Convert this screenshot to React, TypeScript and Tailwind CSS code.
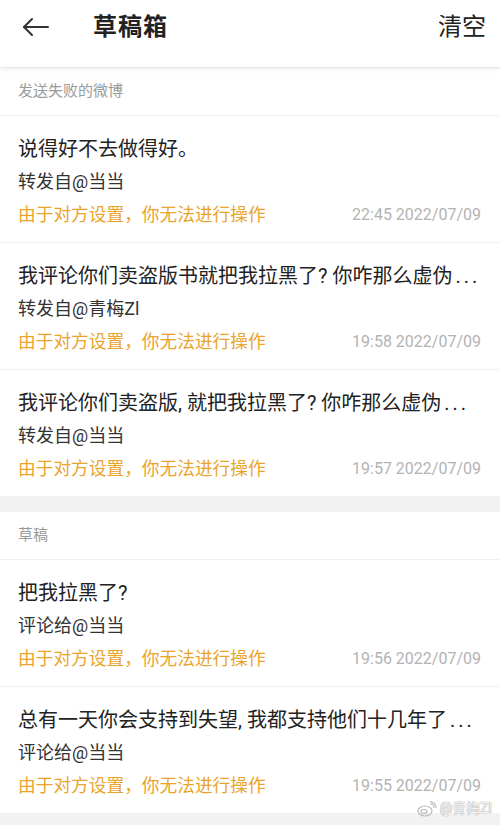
import React from 'react';

type Draft = {
  text: string;
  more?: boolean;
  meta: string;
  time: string;
};

const failed: Draft[] = [
  { text: '说得好不去做得好。', meta: '转发自@当当', time: '22:45 2022/07/09' },
  { text: '我评论你们卖盗版书就把我拉黑了? 你咋那么虚伪', more: true, meta: '转发自@青梅Zl', time: '19:58 2022/07/09' },
  { text: '我评论你们卖盗版, 就把我拉黑了? 你咋那么虚伪', more: true, meta: '转发自@当当', time: '19:57 2022/07/09' },
];

const drafts: Draft[] = [
  { text: '把我拉黑了?', meta: '评论给@当当', time: '19:56 2022/07/09' },
  { text: '总有一天你会支持到失望, 我都支持他们十几年了', more: true, meta: '评论给@当当', time: '19:55 2022/07/09' },
];

function DraftItem({ item }: { item: Draft }) {
  return (
    <div className="px-[18px] pt-[20px] pb-[15px] border-t border-[#f0f0f0]">
      <div className="text-[20px] leading-[26px] text-[#222] whitespace-nowrap">
        {item.text}
        {item.more && <span className="ml-[3px] tracking-[3px]">...</span>}
      </div>
      <div className="mt-[8px] text-[18px] leading-[24px] text-[#333]">{item.meta}</div>
      <div className="mt-[9px] flex items-center justify-between leading-[24px]">
        <span className="text-[17.7px] text-[#eaa42c]">由于对方设置，你无法进行操作</span>
        <span className="text-[16px] text-[#b3b3b3] pr-[1px]">{item.time}</span>
      </div>
    </div>
  );
}

function Section({ title, items }: { title: string; items: Draft[] }) {
  return (
    <section className="bg-white">
      <div className="h-[47px] px-[18px] flex items-center text-[15px] text-[#9a9a9a]">{title}</div>
      {items.map((item, i) => (
        <DraftItem key={i} item={item} />
      ))}
    </section>
  );
}

export default function App() {
  return (
    <div className="relative w-[500px] h-[825px] overflow-hidden bg-[#f2f2f2] font-['Roboto','Noto_Sans_CJK_SC',sans-serif]">
      {/* Header */}
      <header className="h-[53px] bg-white flex items-center px-[22px] pb-[14px] box-content -mb-[14px] shadow-[0_2px_6px_rgba(0,0,0,0.08)] relative z-10">
        <svg width="27" height="20" viewBox="0 0 27 20" fill="none" stroke="#333" strokeWidth="2" strokeLinecap="round" strokeLinejoin="round">
          <path d="M26 10H2" />
          <path d="M10 2L2 10l8 8" />
        </svg>
        <h1 className="ml-[44px] text-[24px] font-bold text-[#222] tracking-[1px]">草稿箱</h1>
        <button className="ml-auto text-[24px] text-[#222] -mr-[8px]">清空</button>
      </header>

      <div className="h-[15px]" />
      <Section title="发送失败的微博" items={failed} />
      <div className="h-[16px]" />
      <Section title="草稿" items={drafts} />

      {/* Watermark */}
      <div className="absolute right-[8px] bottom-[6px] flex items-center gap-[3px] text-[14px] text-white/90 [text-shadow:0_0_1px_#999,0_0_1px_#999]">
        <svg width="20" height="16" viewBox="0 0 20 16" fill="none" stroke="#bbb" strokeWidth="1.2">
          <ellipse cx="8" cy="10" rx="7" ry="5" />
          <ellipse cx="7" cy="10.5" rx="3" ry="2" />
          <path d="M13 3a4 4 0 0 1 4 4" />
          <path d="M13 0.8a6.5 6.5 0 0 1 6.3 6.3" />
        </svg>
        <span>@青梅Zl</span>
      </div>
    </div>
  );
}
